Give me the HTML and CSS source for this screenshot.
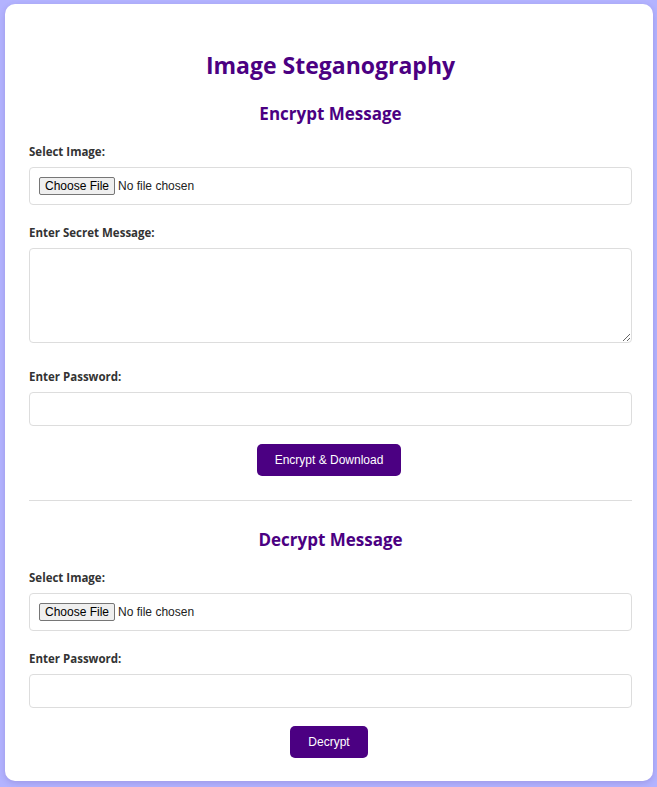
FILE: index.html
```html
<!DOCTYPE html>
<html lang="en">
<head>
<meta charset="utf-8">
<title>Image Steganography</title>
<link rel="stylesheet" href="styles.css">
</head>
<body>
<main class="card">
  <h1 class="title">Image Steganography</h1>

  <section class="section">
    <h2 class="section-title">Encrypt Message</h2>
    <div class="field">
      <label class="label" for="enc-image">Select Image:</label>
      <input class="control file" id="enc-image" type="file" accept="image/*">
    </div>
    <div class="field field-message">
      <label class="label" for="enc-message">Enter Secret Message:</label>
      <textarea class="control message" id="enc-message"></textarea>
    </div>
    <div class="field">
      <label class="label" for="enc-pass">Enter Password:</label>
      <input class="control text" id="enc-pass" type="password">
    </div>
    <div class="actions">
      <button class="btn" type="button">Encrypt &amp; Download</button>
    </div>
  </section>

  <hr class="divider">

  <section class="section">
    <h2 class="section-title">Decrypt Message</h2>
    <div class="field">
      <label class="label" for="dec-image">Select Image:</label>
      <input class="control file" id="dec-image" type="file" accept="image/*">
    </div>
    <div class="field">
      <label class="label" for="dec-pass">Enter Password:</label>
      <input class="control text" id="dec-pass" type="password">
    </div>
    <div class="actions">
      <button class="btn" type="button">Decrypt</button>
    </div>
  </section>
</main>
</body>
</html>
```

FILE: styles.css
```css
html, body {
  margin: 0;
  background: #b3b3ff;
}

body {
  padding: 4px 4px 6px 5px;
  font-family: "Open Sans", "Noto Sans", sans-serif;
}

.card {
  background: #ffffff;
  border-radius: 10px;
  box-shadow: 0 2px 6px rgba(40, 0, 90, 0.15);
  padding: 24px 21px 23px 24px;
}

.title {
  margin: 22px 0 23px;
  font-size: 23px;
  line-height: 30px;
  font-weight: 700;
  color: #4b0082;
  text-align: center;
}

.section-title {
  margin: 0 0 19px;
  font-size: 17px;
  line-height: 22px;
  font-weight: 700;
  color: #4b0082;
  text-align: center;
}

.field {
  margin-bottom: 20px;
}

.field-message {
  margin-bottom: 26px;
}

.label {
  display: block;
  margin-bottom: 7px;
  font-size: 11.5px;
  line-height: 16px;
  font-weight: 700;
  color: #333333;
}

.control {
  display: block;
  box-sizing: border-box;
  width: 100%;
  margin: 0;
  border: 1px solid #dddddd;
  border-radius: 4px;
  background: #ffffff;
  font-family: "Liberation Sans", Arial, sans-serif;
  font-size: 12px;
  line-height: 14px;
  color: #222222;
}

.file {
  padding: 9px;
}

.file::file-selector-button {
  margin: 0 3px 0 0;
  padding: 1px 5px;
  border: 1px solid #767676;
  border-radius: 2px;
  background: #efefef;
  font-family: "Liberation Sans", Arial, sans-serif;
  font-size: 12px;
  line-height: 14px;
  color: #000000;
}

.text {
  padding: 9px;
}

.message {
  height: 95px;
  padding: 8px;
  resize: vertical;
}

.actions {
  display: flex;
  justify-content: center;
  margin-top: -2px;
  padding-right: 3px;
}

.btn {
  padding: 9px 18px;
  border: none;
  border-radius: 5px;
  background: #4b0082;
  color: #ffffff;
  font-family: "Liberation Sans", Arial, sans-serif;
  font-size: 12px;
  line-height: 14px;
  cursor: pointer;
}

.divider {
  margin: 24px 0 28px;
  border: none;
  border-top: 1px solid #dddddd;
}
```
